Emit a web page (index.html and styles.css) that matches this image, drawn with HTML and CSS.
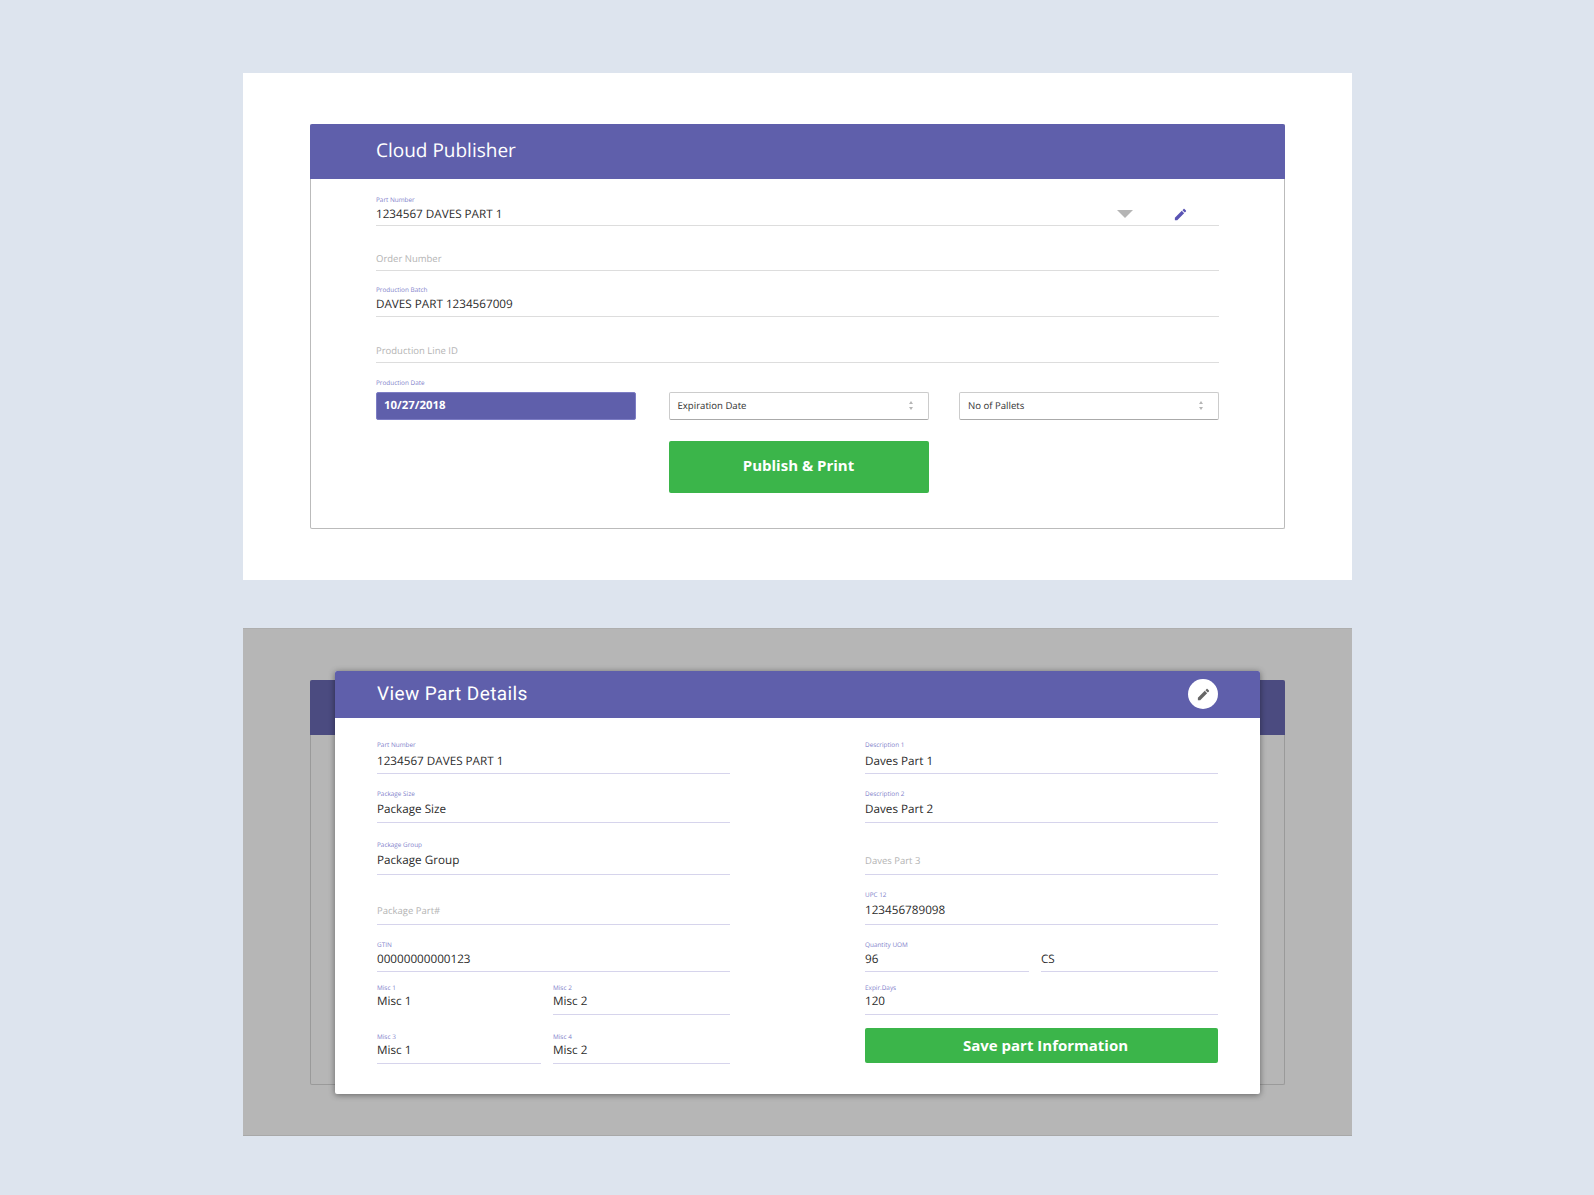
FILE: index.html
```html
<!DOCTYPE html>
<html lang="en">
<head>
    <meta charset="UTF-8">
    <meta name="viewport" content="width=device-width, initial-scale=1.0">
    <title>Cloud Publisher</title>
    <link rel="stylesheet" href="styles.css">
</head>
<body>
    <section class="panel">
        <div class="card">
            <h1 class="card-header">Cloud Publisher</h1>
            <form class="publish-form">
                <div class="field">
                    <span class="field-label">Part Number</span>
                    <span class="field-value">1234567 DAVES PART 1</span>
                    <span class="caret"></span>
                    <svg class="part-edit" viewBox="0 0 24 24"><path d="M3 17.25V21h3.75L17.81 9.94l-3.75-3.75L3 17.25zM20.71 7.04c.39-.39.39-1.02 0-1.41l-2.34-2.34c-.39-.39-1.02-.39-1.41 0l-1.83 1.83 3.75 3.75 1.83-1.83z"/></svg>
                </div>
                <div class="field">
                    <span class="field-label"></span>
                    <span class="field-value placeholder">Order Number</span>
                </div>
                <div class="field raised">
                    <span class="field-label">Production Batch</span>
                    <span class="field-value">DAVES PART 1234567009</span>
                </div>
                <div class="field">
                    <span class="field-label"></span>
                    <span class="field-value placeholder">Production Line ID</span>
                </div>
                <div class="date-row">
                    <div class="date-col">
                        <span class="field-label">Production Date</span>
                        <div class="date-box selected">10/27/2018</div>
                    </div>
                    <div class="date-col">
                        <span class="field-label"></span>
                        <div class="date-box">Expiration Date<span class="stepper"></span></div>
                    </div>
                    <div class="date-col">
                        <span class="field-label"></span>
                        <div class="date-box">No of Pallets<span class="stepper"></span></div>
                    </div>
                    <button type="button" class="btn-publish">Publish &amp; Print</button>
                </div>
            </form>
        </div>
    </section>

    <section class="panel panel-dim">
        <div class="card card-dim">
            <div class="card-header"></div>
        </div>

        <div class="modal">
            <div class="modal-header">
                <h2>View Part Details</h2>
                <span class="edit-circle">
                    <svg viewBox="0 0 24 24"><path d="M3 17.25V21h3.75L17.81 9.94l-3.75-3.75L3 17.25zM20.71 7.04c.39-.39.39-1.02 0-1.41l-2.34-2.34c-.39-.39-1.02-.39-1.41 0l-1.83 1.83 3.75 3.75 1.83-1.83z"/></svg>
                </span>
            </div>
            <div class="modal-body">
                <div class="field wide tall">
                    <span class="field-label">Part Number</span>
                    <span class="field-value">1234567 DAVES PART 1</span>
                </div>
                <div class="field wide tall">
                    <span class="field-label">Description 1</span>
                    <span class="field-value">Daves Part 1</span>
                </div>
                <div class="field wide">
                    <span class="field-label">Package Size</span>
                    <span class="field-value">Package Size</span>
                </div>
                <div class="field wide">
                    <span class="field-label">Description 2</span>
                    <span class="field-value">Daves Part 2</span>
                </div>
                <div class="field wide low">
                    <span class="field-label">Package Group</span>
                    <span class="field-value">Package Group</span>
                </div>
                <div class="field wide low">
                    <span class="field-label"></span>
                    <span class="field-value placeholder">Daves Part 3</span>
                </div>
                <div class="field low">
                    <span class="field-label"></span>
                    <span class="field-value placeholder">Package Part#</span>
                </div>
                <div class="field wide low">
                    <span class="field-label">UPC 12</span>
                    <span class="field-value">123456789098</span>
                </div>
                <div class="field tall">
                    <span class="field-label">GTIN</span>
                    <span class="field-value">00000000000123</span>
                </div>
                <div class="pair">
                    <div class="field tall">
                        <span class="field-label">Quantity UOM</span>
                        <span class="field-value">96</span>
                    </div>
                    <div class="field tall">
                        <span class="field-label"></span>
                        <span class="field-value">CS</span>
                    </div>
                </div>
                <div class="pair">
                    <div class="field no-line">
                        <span class="field-label">Misc 1</span>
                        <span class="field-value">Misc 1</span>
                    </div>
                    <div class="field">
                        <span class="field-label">Misc 2</span>
                        <span class="field-value">Misc 2</span>
                    </div>
                </div>
                <div class="field">
                    <span class="field-label">Expir.Days</span>
                    <span class="field-value">120</span>
                </div>
                <div class="pair">
                    <div class="field">
                        <span class="field-label">Misc 3</span>
                        <span class="field-value">Misc 1</span>
                    </div>
                    <div class="field">
                        <span class="field-label">Misc 4</span>
                        <span class="field-value">Misc 2</span>
                    </div>
                </div>
                <button type="button" class="btn-save">Save part Information</button>
            </div>
        </div>
    </section>
</body>
</html>
```

FILE: styles.css
```css
body {
    margin: 0;
    padding: 73px 0 59px 243px;
    background: #dde4ee;
    font-family: "Open Sans", "Noto Sans", sans-serif;
    color: #333;
    text-rendering: geometricPrecision;
}
.panel {
    position: relative;
    box-sizing: border-box;
    width: 1109px;
    height: 507px;
    padding: 51px 67px 0;
    background: white;
}
.panel-dim {
    height: 508px;
    margin-top: 48px;
    padding-top: 51px;
    background: #b6b6b6;
    border-top: 1px solid #aeaeae;
    border-bottom: 1px solid #a8a8a8;
}
.card {
    height: 404px;
    border: 1px solid #bbb;
    border-top: none;
    border-radius: 2px;
}
.card-header {
    height: 55px;
    margin: 0 -1px;
    padding-left: 66px;
    background: #5f5fab;
    border-radius: 2px 2px 0 0;
    color: white;
    font-size: 19px;
    font-weight: 500;
    line-height: 52px;
}
.card-dim {
    height: 404px;
    border-color: #9a9a9a;
}
.card-dim .card-header {
    background: #4b4b80;
}
.publish-form {
    display: flex;
    flex-direction: column;
    gap: 15px;
    padding: 16px 65px 0;
}
.field {
    position: relative;
    display: flex;
    flex-direction: column;
    padding-bottom: 2px;
    border-bottom: 1px solid #ddd;
}
.publish-form .field:first-child {
    margin-bottom: -1px;
}
.publish-form .raised {
    margin-top: -1px;
    padding-bottom: 3px;
}
.field-label {
    display: block;
    height: 10px;
    color: #7f7fcb;
    font-size: 6.4px;
    line-height: 10px;
}
.field-value {
    height: 18px;
    color: #2b2b2b;
    font-size: 11.7px;
    font-weight: 500;
    line-height: 18px;
}
.placeholder {
    color: #b4b4b4;
    font-size: 9.5px;
    font-weight: 500;
}
.caret {
    position: absolute;
    right: 86px;
    bottom: 7px;
    border-left: 8px solid transparent;
    border-right: 8px solid transparent;
    border-top: 8px solid #b5b5b5;
}
.part-edit {
    position: absolute;
    right: 31px;
    bottom: 3px;
    width: 15px;
    height: 15px;
    fill: #5a54b4;
}
.date-row {
    display: grid;
    grid-template-columns: 292.5px 290.5px 260px;
    row-gap: 21px;
}
.date-col .field-label {
    margin-bottom: 4px;
}
.date-box {
    display: flex;
    align-items: center;
    justify-content: space-between;
    box-sizing: border-box;
    width: 260px;
    height: 28px;
    padding: 0 15px 1px 8px;
    background: white;
    border: 1px solid #ccc;
    border-bottom-color: #aaa;
    border-radius: 2px;
    font-size: 9.6px;
    font-weight: 500;
}
.date-box.selected {
    padding: 0 8px 2px 7px;
    background: #5f5fab;
    border-color: #7d7dc4;
    color: white;
    font-size: 11.4px;
    font-weight: 700;
}
.stepper {
    display: flex;
    flex-direction: column;
    gap: 3px;
}
.stepper::before,
.stepper::after {
    content: "";
    border-left: 2.5px solid transparent;
    border-right: 2.5px solid transparent;
}
.stepper::before {
    border-bottom: 3px solid #b5b5b5;
}
.stepper::after {
    border-top: 3px solid #b5b5b5;
}
.btn-publish {
    grid-column: 2;
    width: 260px;
    height: 52px;
    padding: 0 0 4px;
    background: #3bb54a;
    border: none;
    border-radius: 2px;
    color: white;
    font-family: inherit;
    font-size: 15px;
    font-weight: 700;
}
.modal {
    position: absolute;
    top: 42px;
    left: 92px;
    width: 925px;
    height: 423px;
    background: white;
    border-radius: 2px;
    box-shadow: 0 1px 6px rgba(0,0,0,0.45);
}
.modal-header {
    display: flex;
    align-items: center;
    justify-content: space-between;
    height: 47px;
    padding: 0 42px;
    background: #5f5fab;
    border-radius: 2px 2px 0 0;
    color: white;
}
.modal-header h2 {
    margin: 0 0 3px;
    font-family: Roboto, sans-serif;
    font-size: 19px;
    font-weight: 400;
    letter-spacing: 0.4px;
}
.edit-circle {
    display: flex;
    align-items: center;
    justify-content: center;
    width: 30px;
    height: 30px;
    margin-bottom: 1px;
    background: white;
    border-radius: 50%;
}
.edit-circle svg {
    width: 15px;
    height: 15px;
    fill: #666;
}
.modal-body {
    display: grid;
    grid-template-columns: 353px 353px;
    grid-template-rows: 56px 49px 52px 50px 47px 43px 49px;
    column-gap: 135px;
    align-items: end;
    padding: 0 42px;
}
.modal-body .field {
    padding-bottom: 3px;
    border-bottom-color: #d6d4ec;
}
.modal-body .low {
    padding-bottom: 4px;
}
.modal-body .wide .field-label {
    margin-bottom: 2px;
}
.modal-body .field-value {
    line-height: 16px;
}
.modal-body .tall .field-value,
.modal-body .placeholder {
    line-height: 18px;
}
.modal-body .no-line {
    border-bottom-color: transparent;
}
.pair {
    display: grid;
    grid-template-columns: 164px 177px;
    column-gap: 12px;
}
.btn-save {
    height: 35px;
    margin-bottom: 1px;
    padding: 0 0 2px 8px;
    background: #3bb54a;
    border: none;
    border-radius: 2px;
    color: white;
    font-family: inherit;
    font-size: 15px;
    font-weight: 700;
}
```
